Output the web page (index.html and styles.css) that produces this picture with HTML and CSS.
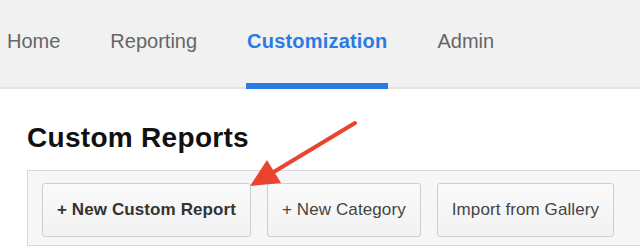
FILE: index.html
```html
<!DOCTYPE html>
<html lang="en">
<head>
    <meta charset="UTF-8">
    <meta name="viewport" content="width=device-width, initial-scale=1.0">
    <title>Custom Reports</title>
    <link rel="stylesheet" href="styles.css">
</head>
<body>
    <nav class="tabs">
        <a class="tab" href="#">Home</a>
        <a class="tab" href="#">Reporting</a>
        <a class="tab active" href="#">Customization</a>
        <a class="tab" href="#">Admin</a>
    </nav>

    <div class="content">
        <h1>Custom Reports</h1>
        <div class="toolbar">
            <button class="btn btn-primary">+ New Custom Report</button>
            <button class="btn">+ New Category</button>
            <button class="btn">Import from Gallery</button>
        </div>
    </div>

    <!-- Annotation arrow pointing at the first button -->
    <svg class="arrow" width="640" height="248" viewBox="0 0 640 248">
        <line x1="355" y1="123" x2="272" y2="173" stroke="#e8442f" stroke-width="4" stroke-linecap="round"/>
        <polygon points="250,186 267,160 281,183" fill="#e8442f"/>
    </svg>
</body>
</html>
```

FILE: styles.css
```css
body {
    font-family: "Liberation Sans", Arial, sans-serif;
    margin: 0;
    padding: 0;
    background-color: #fff;
    overflow: hidden;
}

.tabs {
    display: flex;
    gap: 48px;
    height: 87px;
    padding-left: 6px;
    background-color: #f1f1f1;
    border-bottom: 2px solid #e4e4e4;
}

.tab {
    padding: 30px 1px 0;
    margin-bottom: -2px;
    border-bottom: 6px solid transparent;
    font-size: 20px;
    line-height: 23px;
    color: #666;
    text-decoration: none;
}

.tab.active {
    font-weight: bold;
    letter-spacing: 0.2px;
    color: #2b7be4;
    border-bottom-color: #2b7be4;
}

.content {
    padding-left: 27px;
}

h1 {
    margin: 33px 0 16px;
    font-size: 28px;
    line-height: 32px;
    letter-spacing: 0.3px;
    color: #111;
}

.toolbar {
    display: flex;
    gap: 16px;
    padding: 12px 14px 8px;
    margin-right: -20px;
    background-color: #f6f6f6;
    border: 1px solid #d9d9d9;
}

.btn {
    height: 54px;
    padding: 0 14px;
    font-family: inherit;
    font-size: 17px;
    letter-spacing: 0.1px;
    color: #444;
    background: linear-gradient(#fafafa, #f2f2f2);
    border: 1px solid #cfcfcf;
    border-radius: 3px;
    cursor: pointer;
}

.btn-primary {
    font-weight: bold;
    color: #333;
}

.arrow {
    position: absolute;
    left: 0;
    top: 0;
    pointer-events: none;
}
```
